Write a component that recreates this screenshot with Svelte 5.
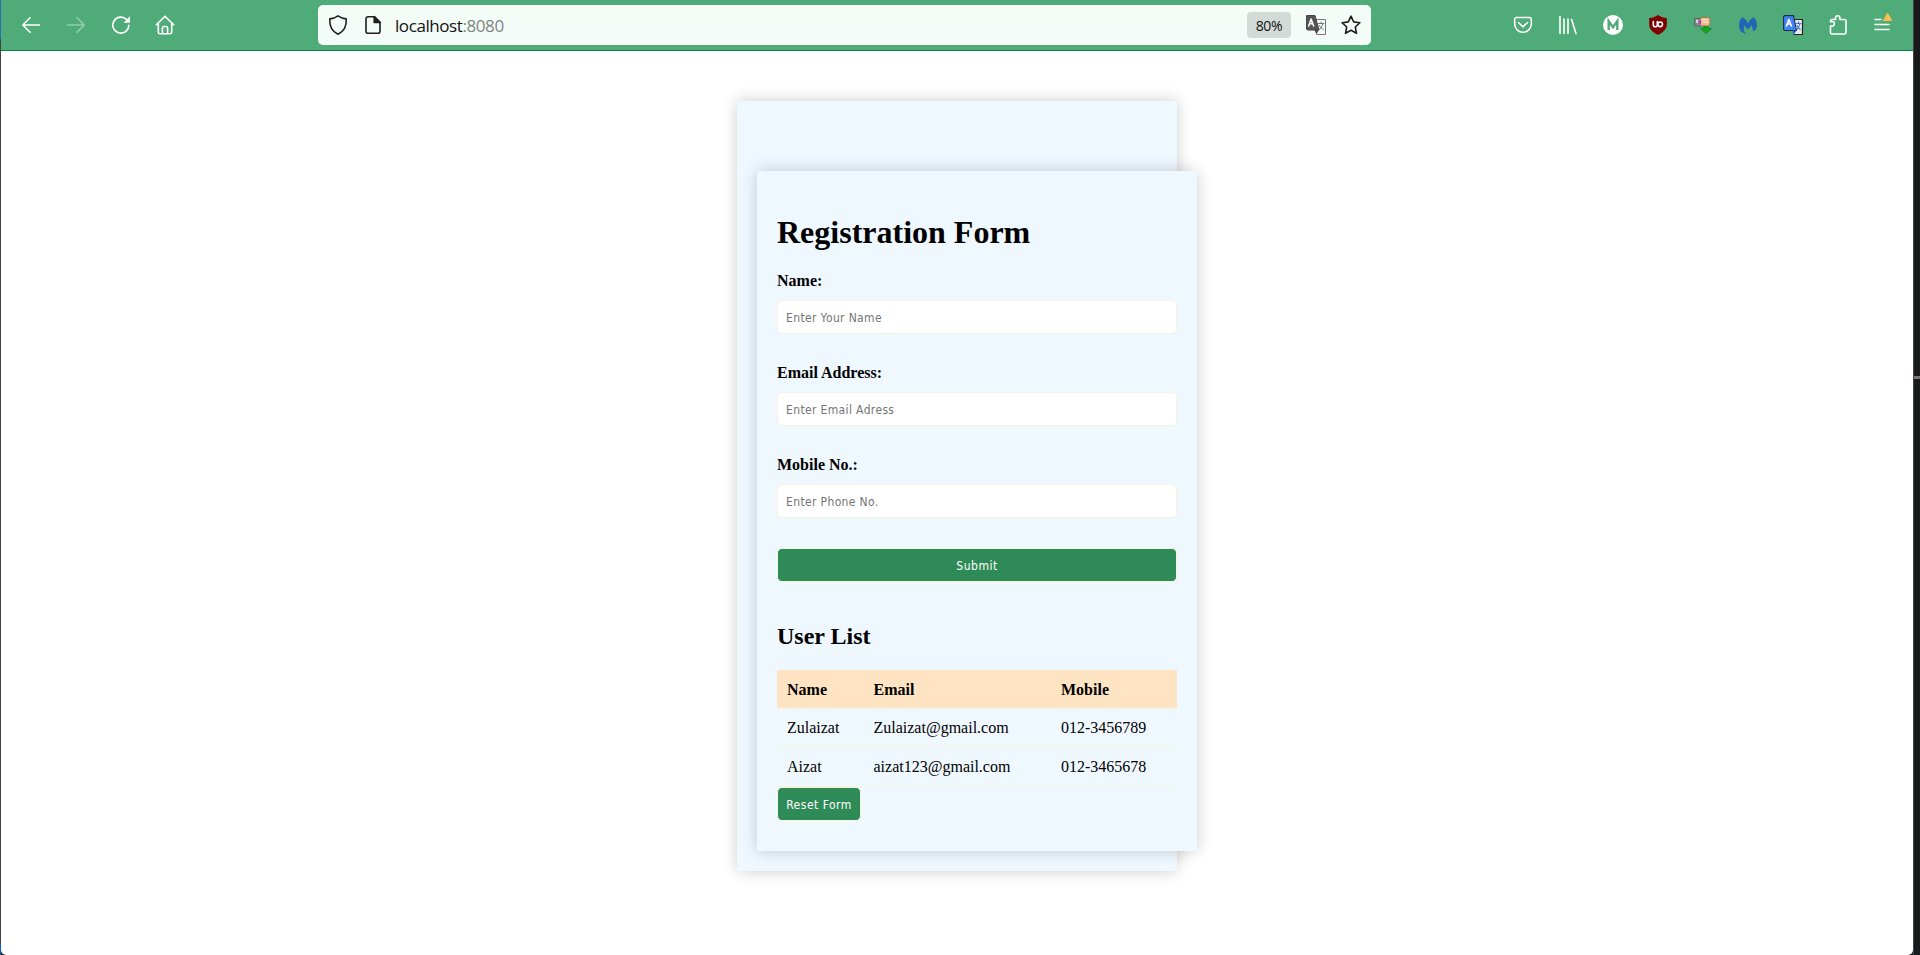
<script>
  const fields = [
    { id: 'name', label: 'Name:', hint: 'Enter Your Name' },
    { id: 'email', label: 'Email Address:', hint: 'Enter Email Adress' },
    { id: 'mobile', label: 'Mobile No.:', hint: 'Enter Phone No.' }
  ];
  const users = [
    { name: 'Zulaizat', email: 'Zulaizat@gmail.com', mobile: '012-3456789' },
    { name: 'Aizat', email: 'aizat123@gmail.com', mobile: '012-3465678' }
  ];
</script>

<div class="screen">
  <div class="left-edge"></div>
  <div class="window">
    <header class="toolbar">
      <nav class="nav">
        <svg width="20" height="20" viewBox="0 0 20 20"><path d="M18.5 10H2M9 2.7 1.8 10 9 17.3" /></svg>
        <svg class="dim" width="20" height="20" viewBox="0 0 20 20"><path d="M1.5 10H18M11 2.7 18.2 10 11 17.3" /></svg>
        <svg width="20" height="20" viewBox="0 0 20 20"><path d="M17.8 10.2A8 8 0 1 1 15.6 4.6" /><path d="M19 1.2V7.7h-6.4z" fill="#fff" stroke="none" /></svg>
        <svg class="home" width="20" height="20" viewBox="0 0 20 20"><path d="M1.3 9.8 10 1.2l8.700 8.600M3.300 8v9.100a1.700 1.700 0 0 0 1.700 1.700h10a1.700 1.700 0 0 0 1.700-1.700V8M7.400 18.500V13a1.500 1.500 0 0 1 1.500-1.500h2.200a1.500 1.500 0 0 1 1.500 1.500v5.500" /></svg>
      </nav>
      <div class="address">
        <svg class="ink" width="20" height="20" viewBox="0 0 20 20"><path d="M10 .8c2.300 1.600 4.900 2.600 8.200 3.100.5 6.700-2 12.400-8.200 15.300C3.800 16.300 1.300 10.600 1.800 3.900 5.100 3.400 7.700 2.400 10 .8z" /></svg>
        <svg class="ink doc" width="20" height="20" viewBox="0 0 20 20"><path d="M11.500 1.800H5A2 2 0 0 0 3 3.800v12.400a2 2 0 0 0 2 2h10a2 2 0 0 0 2-2V7.300z" /><path d="M11.200 1.500v6h6z" fill="#222" /></svg>
        <span class="url">localhost<span>:8080</span></span>
        <span class="zoom">80%</span>
        <svg class="tr" width="20" height="20" viewBox="0 0 20 20"><path d="M8 4.500h11.500v15H11" fill="#f4fbf7" stroke="#777" stroke-width="1" /><path d="M1 .5h8l4 14.500H1.500L.5 14V1z" fill="#555" stroke="#444" stroke-width="1" /><path d="m8.500 15 2 4.500 2-4.500z" fill="#444" stroke="none" /><path d="m2.700 11 2.400-7 2.500 7M3.500 8.800h3.300" stroke="#fff" stroke-width="1.500" /><path d="M12.500 8.500H18M15.200 7v1.500M16.800 8.500c-.5 3-2 5-3.500 6M13.500 10.500c.8 2 2 3 3.800 4" stroke="#777" stroke-width="1" /></svg>
        <svg class="ink star" width="20" height="20" viewBox="0 0 20 20"><path d="m10 1.200 2.700 5.700 6.200.8-4.600 4.300 1.200 6.300L10 15.300l-5.500 3L5.700 12 1.100 7.700l6.200-.8z" /></svg>
      </div>
      <div class="extensions">
        <svg width="20" height="20" viewBox="0 0 20 20"><path d="M3.500 2.500h13a1.800 1.800 0 0 1 1.800 1.800V9a8.300 8.300 0 0 1-16.600 0V4.300A1.800 1.800 0 0 1 3.500 2.500zM5.500 7.500 10 11.800l4.500-4.300" /></svg>
        <svg width="20" height="20" viewBox="0 0 20 20"><path d="M2 1.500v17M6 4v14.500M10 4v14.500M13.600 4.500 18 18.500" /></svg>
        <svg width="20" height="20" viewBox="0 0 20 20"><circle cx="10" cy="10" r="10" fill="#fff" stroke="none" /><path d="M5.700 15V6l4.300 6.200L14.300 6v9" stroke="#4fac78" stroke-width="2.400" stroke-linejoin="miter" stroke-linecap="butt" /></svg>
        <svg width="20" height="20" viewBox="0 0 20 20"><path d="M10 0c3 2 5.500 2.800 8.800 3v6.500c0 5-4 8-8.800 10.500-4.800-2.500-8.800-5.500-8.800-10.500V3C4.500 2.800 7 2 10 0z" fill="#800000" stroke="none" /><path d="M5.300 6.500v3.300a2 2 0 0 0 4 0V6.500" stroke-width="1.600" /><circle cx="12.200" cy="9.300" r="2.300" stroke-width="1.600" /></svg>
        <svg width="20" height="20" viewBox="0 0 20 20"><path d="M2 3.500h6v7.500H2z" fill="#8c8494" stroke="#55505c" stroke-width=".7" /><path d="M3 4.700h2v3H3z" fill="#ddd" stroke="none" /><path d="M10 1.500h4v2h-4z" fill="#35b32c" stroke="none" /><rect x="7" y="2.500" width="10" height="8.500" rx="2" fill="#e8b98a" stroke="#a5714b" stroke-width=".8" /><path d="M6 5.500h2v3.500H6z" fill="#b03cc4" stroke="none" /><path d="M9.500 4.800h5M10 7.300h5" stroke="#f9dcbb" /><path d="M11 11.500h4v1.800h3.500L13 18.700l-5.500-5.400H11z" fill="#17a51b" stroke="#087b10" stroke-width=".6" /></svg>
        <svg width="20" height="20" viewBox="0 0 20 20"><path d="M8 18.800C3.500 18 .9 14.800 1 10.500 1.100 7 2.200 4.300 4 2.200c2.800 1 4.800 3.200 6 6.300 1.200-3.100 3.200-5.300 6-6.300 1.800 2.100 2.900 4.800 3 8.300.1 2.900-1.400 4.900-4 6-.2-2.300-.5-4.200-1.500-6.300L10 14.800l-3.500-4.600c-1.200 3.600-.8 6.400 1.500 8.600z" fill="#1f66b5" stroke="none" /></svg>
        <svg width="20" height="20" viewBox="0 0 20 20"><path d="M8 4.500h11.500v15H11" fill="#e6e8ee" stroke="#222" stroke-width="1.200" /><path d="M1.500.6h9l3 14.900h-12l-.9-1V1.500z" fill="#4385f0" stroke="#1d2b50" stroke-width="1.100" /><path d="m9.500 15.500 1.200 4 2.800-4z" fill="#2456b8" stroke="none" /><path d="m3.400 11 2.500-6.500L8.400 11M4.300 9h3.200" stroke="#fff" stroke-width="1.600" /><path d="M13.500 8.500H18M15.600 7v1.500M17 8.500c-.5 3-1.500 4.500-3 6M14 10.500c.8 2 2 3 3.300 4" stroke="#4778ce" stroke-width="1.100" /></svg>
        <svg width="20" height="20" viewBox="0 0 20 20"><path d="M2.500 11H5a2.300 2.300 0 0 0 0-4.300H2.500V6A1.500 1.500 0 0 1 4 4.500h3.500V3a2.200 2.200 0 0 1 4.400 0v1.500h4.600A1.500 1.500 0 0 1 18 6v11.500a1.500 1.500 0 0 1-1.500 1.500H4a1.500 1.500 0 0 1-1.500-1.500z" /></svg>
        <svg width="20" height="20" viewBox="0 0 20 20"><path d="M2 4.500h6M2 9.500h14M2 14.500h14" /><path d="m14.700-1.500 4 7h-8z" fill="#ffbd4f" stroke="#ffbd4f" stroke-width="1" /></svg>
      </div>
    </header>

    <main class="page">
      <section class="card outer">
        <section class="card inner">
          <h1>Registration Form</h1>
          <form>
            {#each fields as field}
              <label for={field.id}>{field.label}</label>
              <input id={field.id} placeholder={field.hint} />
            {/each}
            <button class="submit" type="button">Submit</button>
          </form>
          <h2>User List</h2>
          <table>
            <colgroup><col class="c1" /><col class="c2" /><col /></colgroup>
            <thead><tr><th>Name</th><th>Email</th><th>Mobile</th></tr></thead>
            <tbody>
              {#each users as user}
                <tr><td>{user.name}</td><td>{user.email}</td><td>{user.mobile}</td></tr>
              {/each}
            </tbody>
          </table>
          <button class="reset" type="button">Reset Form</button>
        </section>
      </section>
    </main>
  </div>
  <div class="right-edge"></div>
</div>

<style>
  :global(body) { background: #17191a; overflow: hidden; }
  .screen { display: flex; height: 955px; overflow: hidden; background: #17191a; }
  .left-edge { width: 1px; background: linear-gradient(#2a70b0 0 39px, #444 39px 943px, #0965b3 943px); }
  .window { width: 1912px; background: #fff; display: flex; flex-direction: column; border-bottom-left-radius: 5px; border-bottom-right-radius: 5px; }
  .right-edge { width: 7px; box-sizing: border-box; border-left: 1px solid #444; background: linear-gradient(transparent 376px, #777 376px 379px, transparent 379px); }
  .toolbar { box-sizing: border-box; height: 51px; background: #4fac78; border-bottom: 1px solid #058744; display: flex; align-items: center; }
  svg { display: block; flex: none; overflow: visible; fill: none; stroke: #fff; stroke-width: 1.600; stroke-linecap: round; stroke-linejoin: round; }
  .nav { display: flex; gap: 25px; padding-left: 20px; width: 317px; flex: none; box-sizing: border-box; }
  .dim { opacity: .4; }
  .home { margin-left: -1px; }
  .address { box-sizing: border-box; width: 1053px; flex: none; height: 40px; border-radius: 5px; background: #f4fcf8; display: flex; align-items: center; padding: 0 10px; }
  .ink { stroke: #1f1f1f; }
  .doc { margin-left: 15px; }
  .url { margin-left: 12px; padding-top: 2px; flex: 1; font: 17px/24px "Open Sans", sans-serif; letter-spacing: -.42px; color: #111; }
  .url span { color: #7d8580; }
  .zoom { width: 44px; height: 26px; border-radius: 4px; background: #d3dbd6; font: 14px/28px "Open Sans", sans-serif; letter-spacing: -.3px; text-align: center; color: #111; }
  .tr { margin-left: 15px; }
  .star { margin-left: 15px; }
  .extensions { display: flex; margin-left: 142px; gap: 25px; }
  .page { flex: 1; display: flex; flex-direction: column; align-items: center; padding-top: 50px; }
  .card { box-sizing: border-box; width: 440px; background: #f0f8ff; box-shadow: 0 0 16px rgba(0, 0, 0, .2); border-radius: 1px; }
  .outer { height: 770px; padding: 70px 20px 20px; }
  .inner { height: 680px; padding: 40px 20px; }
  h1, h2, label, table { font-family: "Liberation Serif", serif; color: #000; }
  h1 { margin: 3px 0 20px; font-size: 32px; line-height: 37px; }
  form { display: flex; flex-direction: column; }
  label { font-size: 16px; line-height: 20px; font-weight: bold; margin-bottom: 9px; }
  input, button { box-sizing: border-box; height: 34px; padding: 1px 8px 0; border: 1px solid beige; border-radius: 5px; font: 12px "DejaVu Sans Condensed", "DejaVu Sans", sans-serif; letter-spacing: .36px; }
  input { width: 400px; margin: 0 0 29px; background: #fff; }
  input::placeholder { color: #757575; opacity: 1; }
  button { background: #2e8b57; color: #fff; letter-spacing: .5px; }
  .submit { margin-top: 1px; }
  h2 { margin: 40px 0 20px; font-size: 24px; line-height: 28px; }
  table { width: 400px; table-layout: fixed; border-collapse: collapse; font-size: 16px; }
  .c1 { width: 86.500px; }
  .c2 { width: 187.500px; }
  th, td { height: 38px; padding: 0 10px; text-align: left; border-bottom: 1px solid beige; line-height: 18px; }
  th { height: 37px; padding-top: 1px; background: #ffe4c4; }
  .reset { display: block; width: 84px; padding: 1px 0 0; }
</style>
